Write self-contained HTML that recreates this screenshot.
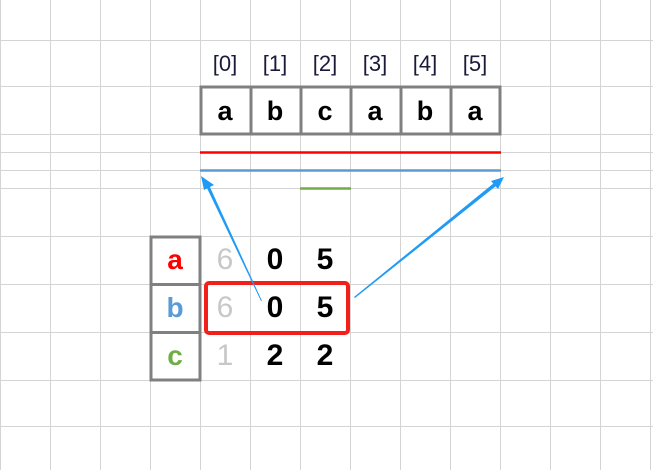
<!DOCTYPE html><html><head><style>
body{margin:0;width:653px;height:470px;overflow:hidden;background:#fff;font-family:"Liberation Sans",sans-serif;position:relative}
.t{position:absolute;text-align:center;width:50px}
</style></head><body>
<svg width="653" height="470" style="position:absolute;left:0;top:0">
<g stroke="#d4d4d4" stroke-width="1">
<line x1="0.5" y1="0" x2="0.5" y2="470"/><line x1="50.5" y1="0" x2="50.5" y2="470"/><line x1="100.5" y1="0" x2="100.5" y2="470"/><line x1="150.5" y1="0" x2="150.5" y2="470"/><line x1="200.5" y1="0" x2="200.5" y2="470"/><line x1="250.5" y1="0" x2="250.5" y2="470"/><line x1="300.5" y1="0" x2="300.5" y2="470"/><line x1="350.5" y1="0" x2="350.5" y2="470"/><line x1="400.5" y1="0" x2="400.5" y2="470"/><line x1="450.5" y1="0" x2="450.5" y2="470"/><line x1="500.5" y1="0" x2="500.5" y2="470"/><line x1="550.5" y1="0" x2="550.5" y2="470"/><line x1="600.5" y1="0" x2="600.5" y2="470"/><line x1="650.5" y1="0" x2="650.5" y2="470"/>
<line x1="0" y1="40.5" x2="653" y2="40.5"/><line x1="0" y1="86.5" x2="653" y2="86.5"/><line x1="0" y1="134.5" x2="653" y2="134.5"/><line x1="0" y1="152.5" x2="653" y2="152.5"/><line x1="0" y1="170.5" x2="653" y2="170.5"/><line x1="0" y1="188.5" x2="653" y2="188.5"/><line x1="0" y1="236.5" x2="653" y2="236.5"/><line x1="0" y1="284.5" x2="653" y2="284.5"/><line x1="0" y1="332.5" x2="653" y2="332.5"/><line x1="0" y1="380.5" x2="653" y2="380.5"/><line x1="0" y1="426.5" x2="653" y2="426.5"/>
</g>
<g stroke="#808080" stroke-width="3" fill="none">
<rect x="201" y="87" width="299" height="47"/>
<line x1="251" y1="87" x2="251" y2="134"/><line x1="301" y1="87" x2="301" y2="134"/><line x1="351" y1="87" x2="351" y2="134"/><line x1="401" y1="87" x2="401" y2="134"/><line x1="451" y1="87" x2="451" y2="134"/>
<rect x="151" y="237" width="49" height="143"/>
<line x1="151" y1="284.5" x2="200" y2="284.5"/><line x1="151" y1="332.5" x2="200" y2="332.5"/>
</g>
<line x1="200" y1="152.5" x2="501" y2="152.5" stroke="#ff0000" stroke-width="2.5"/>
<line x1="200" y1="170.5" x2="501" y2="170.5" stroke="#5b9bd5" stroke-width="2.5"/>
<line x1="300" y1="188.5" x2="351" y2="188.5" stroke="#70ad47" stroke-width="2.5"/>
<rect x="206" y="283" width="142" height="50" rx="3" fill="none" stroke="#f2201a" stroke-width="4"/>
<g fill="#1f9bf5">
<polygon points="262,301 261,301 206,186 209,185"/>
<polygon points="201,176 214,185 204,190"/>
<polygon points="355,298 354,297 494,183 496,186"/>
<polygon points="504,177 491,181 498,189"/>
</g>
</svg>
<div style="position:absolute;left:200px;top:51px;font-size:22px;color:#1a1a3a">
<span class="t" style="left:0">[0]</span><span class="t" style="left:50px">[1]</span><span class="t" style="left:100px">[2]</span><span class="t" style="left:150px">[3]</span><span class="t" style="left:200px">[4]</span><span class="t" style="left:250px">[5]</span></div>
<div style="position:absolute;left:200px;top:96px;font-size:27px;font-weight:bold;color:#000">
<span class="t" style="left:0">a</span><span class="t" style="left:50px">b</span><span class="t" style="left:100px">c</span><span class="t" style="left:150px">a</span><span class="t" style="left:200px">b</span><span class="t" style="left:250px">a</span></div>
<div style="position:absolute;left:150px;top:0;font-size:28px;font-weight:bold">
<span class="t" style="left:0;top:244px;color:#ff0000">a</span>
<span class="t" style="left:0;top:292px;color:#5b9bd5">b</span>
<span class="t" style="left:0;top:340px;color:#70ad47">c</span>
<span class="t" style="left:50px;top:243px;color:#c8c8c8;font-weight:normal;font-size:30px">6</span>
<span class="t" style="left:50px;top:291px;color:#c8c8c8;font-weight:normal;font-size:30px">6</span>
<span class="t" style="left:50px;top:339px;color:#c8c8c8;font-weight:normal;font-size:30px">1</span>
<span class="t" style="left:100px;top:243px;font-size:30px">0</span><span class="t" style="left:150px;top:243px;font-size:30px">5</span>
<span class="t" style="left:100px;top:291px;font-size:30px">0</span><span class="t" style="left:150px;top:291px;font-size:30px">5</span>
<span class="t" style="left:100px;top:339px;font-size:30px">2</span><span class="t" style="left:150px;top:339px;font-size:30px">2</span>
</div>
</body></html>
